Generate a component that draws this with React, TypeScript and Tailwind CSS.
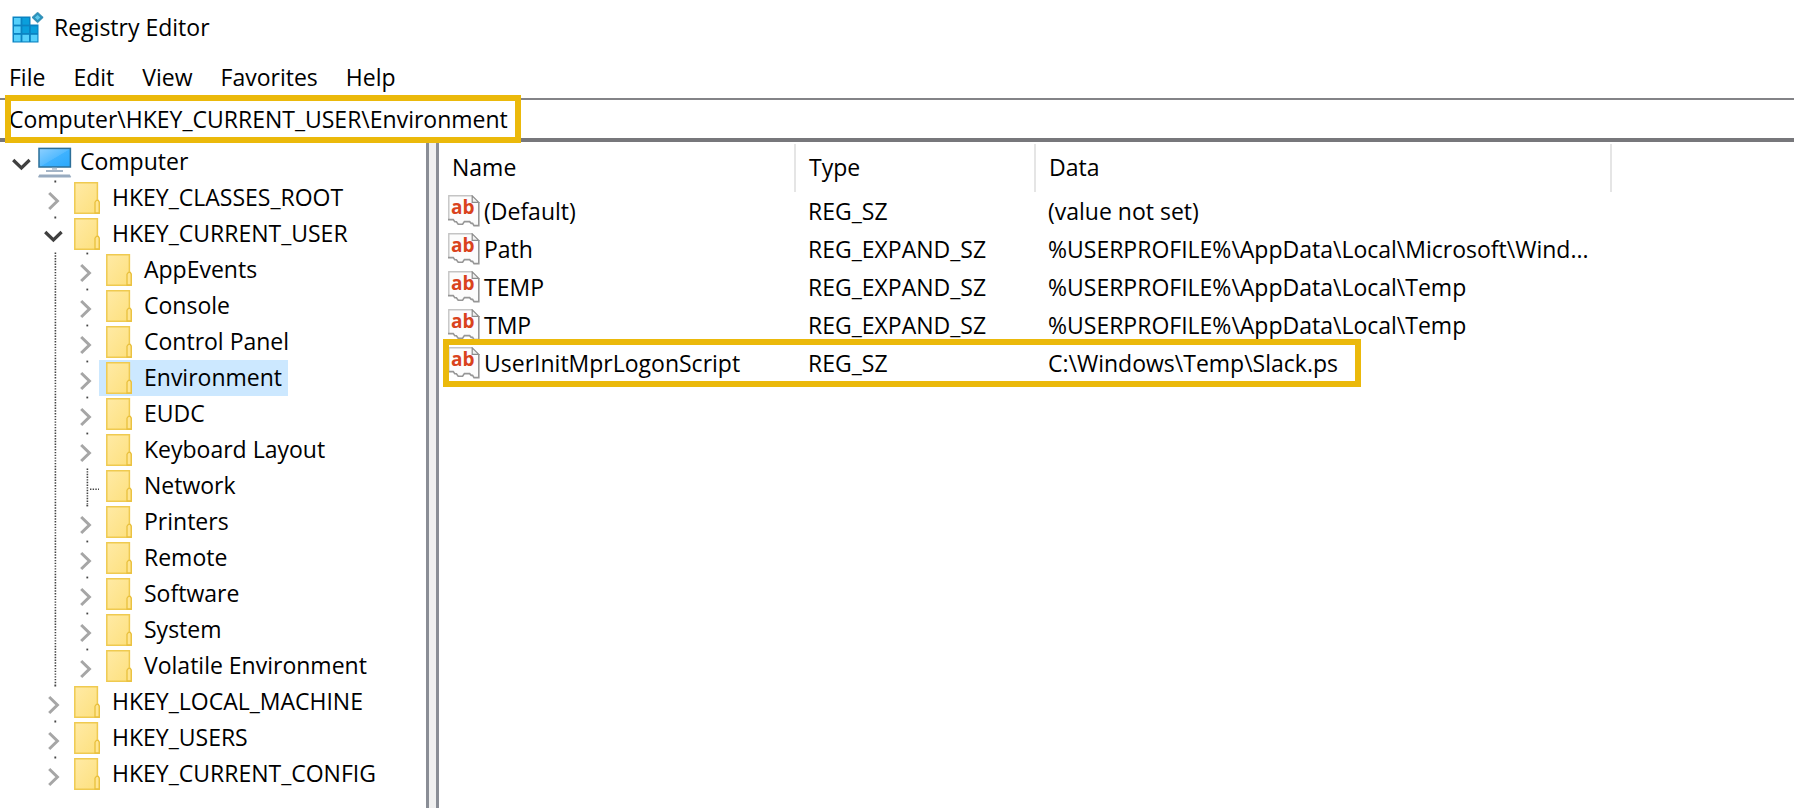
import { clsx } from "clsx"

type NodeState = "open" | "closed" | "leaf"

interface TreeNode {
  label: string
  level: 0 | 1 | 2
  state: NodeState
  selected?: boolean
}

interface RegistryValue {
  name: string
  type: string
  data: string
  flagged?: boolean
}

const menuItems = ["File", "Edit", "View", "Favorites", "Help"]

const nodes: TreeNode[] = [
  { label: "Computer", level: 0, state: "open" },
  { label: "HKEY_CLASSES_ROOT", level: 1, state: "closed" },
  { label: "HKEY_CURRENT_USER", level: 1, state: "open" },
  { label: "AppEvents", level: 2, state: "closed" },
  { label: "Console", level: 2, state: "closed" },
  { label: "Control Panel", level: 2, state: "closed" },
  { label: "Environment", level: 2, state: "closed", selected: true },
  { label: "EUDC", level: 2, state: "closed" },
  { label: "Keyboard Layout", level: 2, state: "closed" },
  { label: "Network", level: 2, state: "leaf" },
  { label: "Printers", level: 2, state: "closed" },
  { label: "Remote", level: 2, state: "closed" },
  { label: "Software", level: 2, state: "closed" },
  { label: "System", level: 2, state: "closed" },
  { label: "Volatile Environment", level: 2, state: "closed" },
  { label: "HKEY_LOCAL_MACHINE", level: 1, state: "closed" },
  { label: "HKEY_USERS", level: 1, state: "closed" },
  { label: "HKEY_CURRENT_CONFIG", level: 1, state: "closed" },
]

const values: RegistryValue[] = [
  { name: "(Default)", type: "REG_SZ", data: "(value not set)" },
  { name: "Path", type: "REG_EXPAND_SZ", data: "%USERPROFILE%\\AppData\\Local\\Microsoft\\Wind..." },
  { name: "TEMP", type: "REG_EXPAND_SZ", data: "%USERPROFILE%\\AppData\\Local\\Temp" },
  { name: "TMP", type: "REG_EXPAND_SZ", data: "%USERPROFILE%\\AppData\\Local\\Temp" },
  { name: "UserInitMprLogonScript", type: "REG_SZ", data: "C:\\Windows\\Temp\\Slack.ps", flagged: true },
]

function RegeditIcon() {
  const light = "#55d0fb"
  const dark = "#0a9fdc"
  const cells = [
    [light, dark],
    [light, dark, dark],
    [light, light, light],
  ]
  return (
    <svg viewBox="0 0 32 32" className="size-8" aria-hidden="true">
      <path d="M.5 4.5h18v8h8v18H.5z" fill="#0b83c2" />
      {cells.map((row, y) =>
        row.map((fill, x) => (
          <rect key={`${x}-${y}`} x={2 + x * 8.4} y={6 + y * 8.4} width="6.6" height="6.6" fill={fill} />
        ))
      )}
      <path d="M25.6 .2 31.2 5.4 25.6 10.8 20 5.4z" fill="#2a93bd" stroke="#2580a8" strokeWidth=".8" />
      <path d="M25.6 3 28.3 5.4 25.6 8 22.9 5.4z" fill="#5fc7ea" />
    </svg>
  )
}

function ComputerIcon() {
  return (
    <svg viewBox="0 0 34 32" className="h-8 w-[34px]" aria-hidden="true">
      <defs>
        <linearGradient id="screen" x1="0" y1="0" x2="1" y2="1">
          <stop offset="0" stopColor="#8ed0ff" />
          <stop offset=".5" stopColor="#55bbff" />
          <stop offset=".52" stopColor="#3fb2ff" />
          <stop offset="1" stopColor="#2aa8fb" />
        </linearGradient>
      </defs>
      <rect x="1" y="2.4" width="31.4" height="18.6" fill="url(#screen)" stroke="#2d6f98" strokeWidth="1.5" />
      <path d="M14 21.8h5v2h-5z" fill="#b8c6d4" />
      <path d="M8 25h17" stroke="#8ea3ba" strokeWidth="1.6" />
      <path d="M.4 31.6v-1.4l1-1.6h30.4l1 1.6v1.4z" fill="#98abc0" />
    </svg>
  )
}

function FolderIcon() {
  return (
    <svg viewBox="0 0 26 32" className="h-8 w-[26px]" aria-hidden="true">
      <defs>
        <linearGradient id="folder" x1="0" y1="0" x2="1" y2="1">
          <stop offset="0" stopColor="#ffeaa5" />
          <stop offset="1" stopColor="#fde07d" />
        </linearGradient>
      </defs>
      <path d="M.8 .8h22.6v18l1.8 1.6v10.8H.8z" fill="url(#folder)" stroke="#efca50" strokeWidth="1.5" />
      <path d="M21 31V20.2l1.4-1.8h2l.8 1.8V31z" fill="#ffe591" stroke="#e9c03e" strokeWidth="1.3" />
    </svg>
  )
}

function StringValueIcon() {
  return (
    <svg viewBox="0 0 32 32" className="size-8 shrink-0" aria-hidden="true">
      <path d="M.8 24.5V.8h23.4l6.6 6.6v23.4H26l-3.4-4H17l-2.6 3H9.6l-4-5.3z" fill="#fcfcfc" />
      <path d="M.8 24.5V.8h23.4" fill="none" stroke="#c4c4c4" strokeWidth="1.4" />
      <path d="M24.2 .8v6.6h6.6z" fill="#f2f2f2" stroke="#8c8c8c" strokeWidth="1.2" />
      <path
        d="M0 24.6h5.2l1.6 2.2h1.6l1.8 2.4h4.4l1.8-2.6h5.2l1.6 1.8h1.4l1.4 2.2h4.8V7.6"
        fill="none"
        stroke="#969696"
        strokeWidth="1.6"
      />
      <text x="3" y="19" className="fill-[#d9431c] text-[19px] font-bold">
        ab
      </text>
    </svg>
  )
}

// Expander arrow plus the dotted connector that shows between rows
function Expander({ node }: { node: TreeNode }) {
  return (
    <svg viewBox="0 0 27 36" className="h-9 w-[27px]" fill="none" aria-hidden="true">
      {node.level > 0 && node.state !== "leaf" && <path d="M14.4 .6h1.8v1.8h-1.8z" fill="#444" />}
      {node.state === "leaf" && (
        <path d="M15.4 .5V38M18 21.2h10" stroke="#444" strokeWidth="1.6" strokeDasharray="1.4 1.27" />
      )}
      {node.state === "closed" && <path d="M9.2 13 17.4 21 9.2 29" stroke="#a6a6a6" strokeWidth="3" />}
      {node.state === "open" && <path d="M5.2 16 13.4 24 21.6 16" stroke="#404040" strokeWidth="3.2" />}
    </svg>
  )
}

function TreeGuide() {
  return (
    <svg viewBox="0 0 32 36" className="h-9 w-8" aria-hidden="true">
      <path d="M15.4 .5V36" stroke="#444" strokeWidth="1.6" strokeDasharray="1.4 1.37" />
    </svg>
  )
}

function TreeRow({ node }: { node: TreeNode }) {
  return (
    <li className="flex h-9 items-center pl-2">
      {node.level > 0 && <span className="w-8" />}
      {node.level > 1 && <TreeGuide />}
      <Expander node={node} />
      <button
        type="button"
        className={clsx("flex h-9 items-center gap-2 pr-1.5 pl-[3px]", node.selected && "bg-[#cce8ff]")}
      >
        <span className="flex w-[34px] justify-center">
          {node.level === 0 ? <ComputerIcon /> : <FolderIcon />}
        </span>
        <span className="pb-[3px] whitespace-nowrap">{node.label}</span>
      </button>
    </li>
  )
}

function ValueTable() {
  return (
    <table className="table-fixed border-collapse whitespace-nowrap">
      <thead>
        <tr className="h-12 text-left">
          <th className="w-[356px] border-r-2 border-[#e5e5e5] pb-0.5 pl-[13px] font-normal">Name</th>
          <th className="w-60 border-r-2 border-[#e5e5e5] pb-0.5 pl-[13px] font-normal">Type</th>
          <th className="w-[576px] border-r-2 border-[#e5e5e5] pb-0.5 pl-[13px] font-normal">Data</th>
        </tr>
      </thead>
      <tbody>
        {values.map((value) => (
          <tr key={value.name} className="h-[38px]">
            <td className="relative pl-[9px]">
              <div className="flex items-center gap-1">
                <StringValueIcon />
                {value.name}
              </div>
              {value.flagged && (
                <div className="pointer-events-none absolute -top-[5px] left-1 h-12 w-[918px] border-6 border-[#ebb90b]" />
              )}
            </td>
            <td className="pl-[13px]">{value.type}</td>
            <td className="pl-[13px]">{value.data}</td>
          </tr>
        ))}
      </tbody>
    </table>
  )
}

export default function App() {
  return (
    <div className="flex min-h-screen flex-col bg-white font-['Open_Sans','Noto_Sans',sans-serif] text-[23px] leading-8 text-black">
      <header className="flex h-14 items-center gap-2.5 pl-3">
        <RegeditIcon />
        <h1 className="pb-0.5">Registry Editor</h1>
      </header>

      <nav className="flex h-[42px] items-center gap-7 pl-[9px]">
        {menuItems.map((item) => (
          <button key={item} type="button">
            {item}
          </button>
        ))}
      </nav>

      {/* Address bar, with the marker drawn over its left end */}
      <div className="relative border-t-2 border-b-4 border-t-[#838387] border-b-[#77777b]">
        <input
          type="text"
          aria-label="Registry path"
          defaultValue="Computer\HKEY_CURRENT_USER\Environment"
          className="block h-[38px] w-full pl-[9px] outline-none"
        />
        <div className="pointer-events-none absolute -top-[5px] left-[5px] h-12 w-[516px] border-6 border-[#ebb90b]" />
      </div>

      <main className="flex grow">
        <ul className="w-[426px] shrink-0 pt-[2px]">
          {nodes.map((node) => (
            <TreeRow key={node.label} node={node} />
          ))}
        </ul>
        <div className="w-[13px] shrink-0 border-x-3 border-[#8a8e96] bg-[#f0f0f0]" />
        <section className="grow pt-[2px]">
          <ValueTable />
        </section>
      </main>
    </div>
  )
}
